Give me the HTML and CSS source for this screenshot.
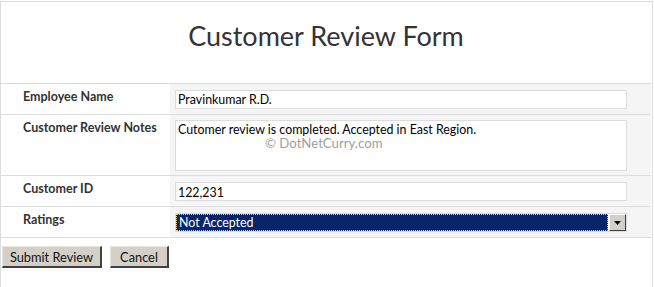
FILE: index.html
```html
<!DOCTYPE html>
<html lang="en">
<head>
<meta charset="utf-8">
<title>Customer Review Form</title>
<link rel="stylesheet" href="styles.css">
</head>
<body>
<div class="page">
  <header class="head">
    <h1 class="title">Customer Review Form</h1>
  </header>
  <div class="form">
    <div class="row">
      <div class="label">Employee Name</div>
      <div class="value"><div class="field">Pravinkumar R.D.</div></div>
    </div>
    <div class="row">
      <div class="label">Customer Review Notes</div>
      <div class="value notes-cell">
        <div class="field area">Cutomer review is completed. Accepted in East Region.</div>
        <span class="watermark">© DotNetCurry.com</span>
      </div>
    </div>
    <div class="row">
      <div class="label">Customer ID</div>
      <div class="value"><div class="field id">122,231</div></div>
    </div>
    <div class="row">
      <div class="label">Ratings</div>
      <div class="value">
        <div class="select">
          <div class="selected"><span class="sel-text">Not Accepted</span></div>
          <div class="arrow"><svg width="7" height="4" viewBox="0 0 7 4"><path d="M0 0H7L3.5 4Z" fill="#000"/></svg></div>
        </div>
      </div>
    </div>
  </div>
  <div class="actions">
    <button class="btn submit" type="button">Submit Review</button>
    <button class="btn cancel" type="button">Cancel</button>
  </div>
</div>
</body>
</html>
```
FILE: styles.css
```css
html, body {
  margin: 0;
  padding: 0;
  background: #fff;
  overflow: hidden;
}
body {
  font-family: "Lato", "Open Sans", sans-serif;
  color: #333;
}
.page {
  margin-top: 1px;
  width: 653px;
  height: 286px;
  box-sizing: border-box;
  border: 1px solid #dcdcdc;
  border-bottom: none;
  padding-right: 1px;
}
.head {
  height: 81px;
  display: flex;
  justify-content: center;
  border-bottom: 1px solid #dcdcdc;
}
.title {
  margin: 18px 0 0 0;
  font-size: 27px;
  font-weight: normal;
  color: #333;
  line-height: 32px;
}
.row {
  display: grid;
  grid-template-columns: 169px 1fr;
  border-bottom: 1px solid #dcdcdc;
}
.label {
  padding: 5px 0 0 22px;
  font-size: 12.5px;
  font-weight: bold;
  line-height: 16px;
  color: #333;
}
.value {
  background: #f5f5f5;
  padding: 6px 24px 5px 5px;
}
.field {
  height: 17px;
  border: 1px solid #dcdcdc;
  background: #fff;
  font-size: 12.4px;
  line-height: 18px;
  color: #000;
  padding-left: 2px;
}
.notes-cell {
  position: relative;
  padding-top: 5px;
  padding-bottom: 4px;
}
.area {
  height: 49px;
  line-height: 18px;
}
.id {
  height: 17px;
  line-height: 19px;
}
.watermark {
  position: absolute;
  left: 95px;
  top: 20px;
  font-size: 13.2px;
  color: #a0a0a0;
  line-height: 16px;
}
.select {
  display: flex;
  height: 17px;
  border: 1px solid #dcdcdc;
  background: #fff;
}
.selected {
  flex: 1;
  background: #0a246a;
  outline: 1px dotted #e8d080;
  outline-offset: -1px;
  display: flex;
  align-items: center;
  padding-left: 3px;
}
.sel-text {
  color: #fff;
  font-size: 12.4px;
  line-height: 17px;
}
.arrow {
  margin-left: 1px;
  background: #d4d0c8;
  border-top: 1px solid #fff;
  border-left: 1px solid #fff;
  border-right: 1px solid #404040;
  border-bottom: 1px solid #404040;
  box-sizing: border-box;
  width: 17px;
  display: flex;
  align-items: center;
  justify-content: center;
}
.actions {
  display: flex;
  gap: 8px;
  padding: 8px 0 0 1px;
}
.btn {
  font-family: "Lato", "Open Sans", sans-serif;
  font-size: 12.8px;
  color: #111;
  background: #d4d0c8;
  height: 22px;
  padding: 0;
  border-top: 1px solid #e8e6e0;
  border-left: 1px solid #e8e6e0;
  border-right: 2px solid #404040;
  border-bottom: 2px solid #404040;
  border-radius: 0;
}
.submit { width: 100px; }
.cancel { width: 59px; }
```
